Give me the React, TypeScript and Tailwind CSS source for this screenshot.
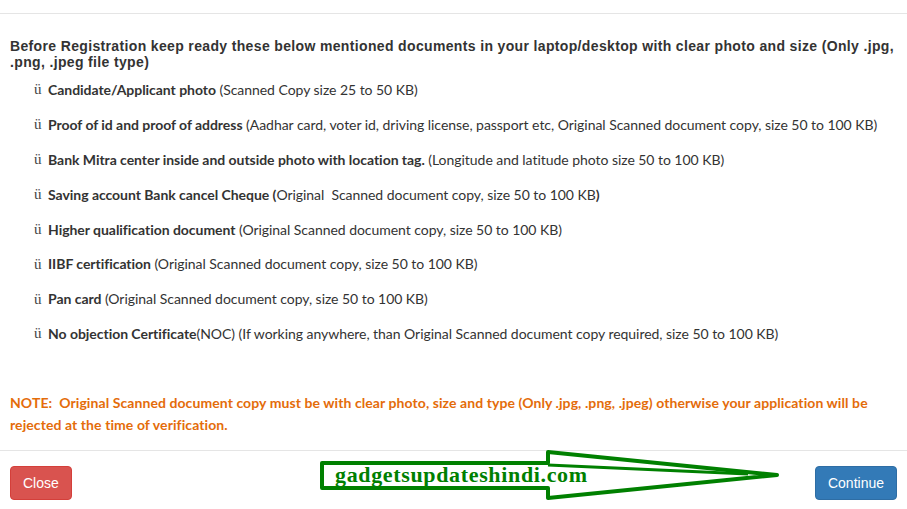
import React from 'react'

const docs: { title: string; note: string }[] = [
    { title: 'Candidate/Applicant photo', note: ' (Scanned Copy size 25 to 50 KB)' },
    { title: 'Proof of id and proof of address', note: ' (Aadhar card, voter id, driving license, passport etc, Original Scanned document copy, size 50 to 100 KB)' },
    { title: 'Bank Mitra center inside and outside photo with location tag.', note: ' (Longitude and latitude photo size 50 to 100 KB)' },
    { title: 'Saving account Bank cancel Cheque (', note: 'Original  Scanned document copy, size 50 to 100 KB' },
    { title: 'Higher qualification document', note: ' (Original Scanned document copy, size 50 to 100 KB)' },
    { title: 'IIBF certification', note: ' (Original Scanned document copy, size 50 to 100 KB)' },
    { title: 'Pan card', note: ' (Original Scanned document copy, size 50 to 100 KB)' },
    { title: 'No objection Certificate', note: '(NOC) (If working anywhere, than Original Scanned document copy required, size 50 to 100 KB)' },
]

const Watermark = () => (
    <div className="absolute left-[318px] top-[448px] w-[464px] h-[56px] pointer-events-none">
        <svg width="464" height="56" viewBox="0 0 464 56" className="absolute inset-0">
            <polygon
                points="4,15 230,15 230,4 459,27 230,50 230,40 4,40"
                fill="none"
                stroke="#008000"
                strokeWidth="4"
                strokeLinejoin="round"
            />
            <line x1="230" y1="17" x2="430" y2="26" stroke="#008000" strokeWidth="3" />
        </svg>
        <span className="absolute left-[17px] top-[15px] text-[22px] leading-[24px] font-bold text-[#008000] whitespace-nowrap [font-family:'Liberation_Serif',serif] tracking-[0.65px]">
            gadgetsupdateshindi.com
        </span>
    </div>
)

export default function App() {
    return (
        <div className="relative w-[907px] h-[509px] bg-white overflow-hidden">
            <div className="h-[14px] border-b border-[#e5e5e5]" />

            <div className="px-[10px]">
                <h5 className="mt-[24px] text-[14px] leading-[16px] font-bold text-[#333] tracking-[0.35px] [font-family:'Liberation_Sans',Arial,sans-serif]">
                    Before Registration keep ready these below mentioned documents in your laptop/desktop with clear photo and size (Only .jpg, .png, .jpeg file type)
                </h5>

                <ul className="mt-[2px] pl-[24px] text-[#333] text-[14px] tracking-[-0.04px] [font-family:Lato,'Open_Sans',sans-serif]">
                    {docs.map((d) => (
                        <li key={d.title} className="h-[34.9px] flex items-center whitespace-nowrap">
                            <span className="w-[14px] text-[15px] [font-family:'Liberation_Serif',serif] text-[#444]">ü</span>
                            <b className="font-bold">{d.title}</b>
                            <span className="whitespace-pre">{d.note}</span>
                            {d.title.endsWith('(') && <b className="font-bold">)</b>}
                        </li>
                    ))}
                </ul>

                <p className="mt-[41px] text-[14px] leading-[22px] font-bold text-[#e46c0a] tracking-[0.08px] [font-family:Lato,'Open_Sans',sans-serif]">
                    NOTE:&nbsp; Original Scanned document copy must be with clear photo, size and type (Only .jpg, .png, .jpeg) otherwise your application will be rejected at the time of verification.
                </p>
            </div>

            <div className="mt-[14px] border-t border-[#e5e5e5] px-[10px] pt-[15px] flex justify-between [font-family:'Liberation_Sans',Arial,sans-serif]">
                <button className="h-[34px] px-[12px] rounded-[4px] bg-[#d9534f] border border-[#d43f3a] text-white text-[14px]">
                    Close
                </button>
                <button className="h-[34px] px-[12px] rounded-[4px] bg-[#337ab7] border border-[#2e6da4] text-white text-[14px]">
                    Continue
                </button>
            </div>

            <Watermark />
        </div>
    )
}
